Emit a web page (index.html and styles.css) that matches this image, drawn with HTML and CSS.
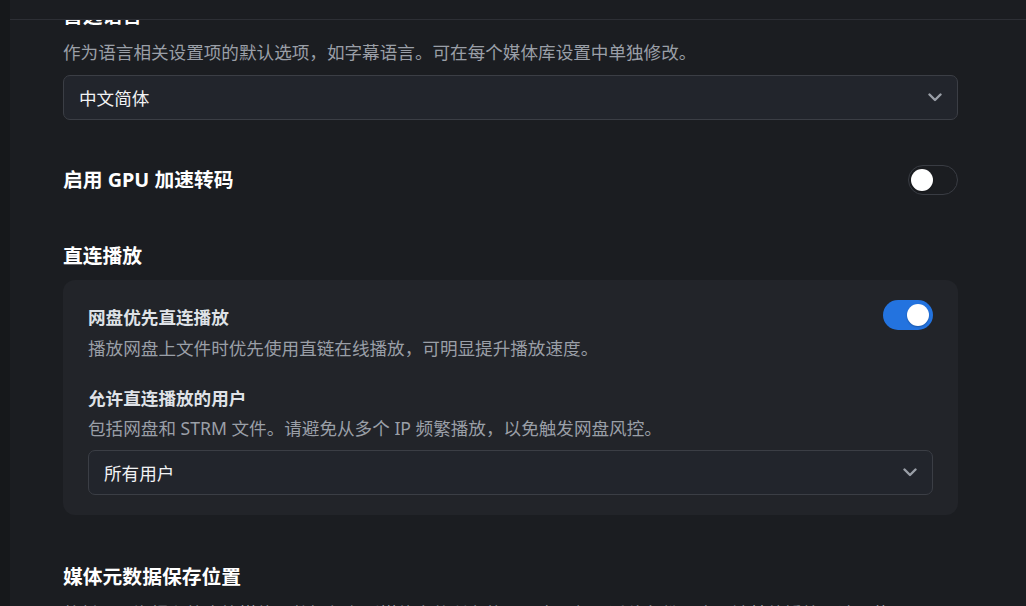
FILE: index.html
```html
<!DOCTYPE html>
<html lang="zh-CN">
<head>
<meta charset="utf-8">
<title>设置</title>
<link rel="stylesheet" href="styles.css">
</head>
<body>
<div class="sidebar"></div>
<main class="main">
  <div class="topbar"></div>
  <div class="content">
    <h2 class="title">首选语言</h2>
    <p class="desc gap-10">作为语言相关设置项的默认选项，如字幕语言。可在每个媒体库设置中单独修改。</p>
    <div class="select gap-11">
      <span>中文简体</span>
      <svg class="chev" width="14" height="9" viewBox="0 0 14 9"><path d="M1.5 1.5 L7 7 L12.5 1.5" fill="none" stroke="currentColor" stroke-width="2.4" stroke-linecap="round" stroke-linejoin="round"/></svg>
    </div>

    <div class="row-gpu">
      <h2 class="title">启用 GPU 加速转码</h2>
      <div class="toggle off"><span class="knob"></span></div>
    </div>

    <h2 class="title gap-47">直连播放</h2>
    <div class="card">
      <div class="card-row">
        <div class="card-text">
          <div class="card-title first">网盘优先直连播放</div>
          <p class="desc gap-7">播放网盘上文件时优先使用直链在线播放，可明显提升播放速度。</p>
        </div>
        <div class="toggle on"><span class="knob"></span></div>
      </div>
      <div class="card-block">
        <div class="card-title">允许直连播放的用户</div>
        <p class="desc gap-6">包括网盘和 STRM 文件。请避免从多个 IP 频繁播放，以免触发网盘风控。</p>
        <div class="select gap-10">
          <span>所有用户</span>
          <svg class="chev" width="14" height="9" viewBox="0 0 14 9"><path d="M1.5 1.5 L7 7 L12.5 1.5" fill="none" stroke="currentColor" stroke-width="2.4" stroke-linecap="round" stroke-linejoin="round"/></svg>
        </div>
      </div>
    </div>

    <h2 class="title gap-48">媒体元数据保存位置</h2>
    <p class="desc gap-10">将封面、海报和简介等媒体元数据保存到媒体文件所在的目录中，便于迁移备份，也可被其他播放器读取使用。</p>
  </div>
</main>
</body>
</html>
```

FILE: styles.css
```css
* { box-sizing: border-box; }

html, body {
  margin: 0;
  height: 100%;
}

body {
  display: flex;
  background: #1b1d21;
  font-family: "Noto Sans", "Noto Sans CJK SC", sans-serif;
  overflow: hidden;
}

.sidebar {
  width: 10px;
  flex: none;
  background: #16181b;
}

.main {
  flex: 1;
  position: relative;
  overflow: hidden;
  background: #1b1d21;
}

.topbar {
  position: absolute;
  top: 0;
  left: 0;
  right: 0;
  height: 20px;
  background: #1b1d21;
  border-bottom: 1px solid #2d2f35;
  z-index: 2;
}

.content {
  padding: 2px 68px 0 53px;
}

.title {
  margin: 0;
  font-size: 19.8px;
  line-height: 28px;
  font-weight: 700;
  color: #ffffff;
  font-family: "Noto Sans", "Noto Sans CJK SC", sans-serif;
}

.desc {
  margin: 0;
  font-size: 17.6px;
  line-height: 24px;
  color: #9a9fa7;
  white-space: nowrap;
}

.gap-6 { margin-top: 6px; }
.gap-7 { margin-top: 7px; }
.gap-10 { margin-top: 10px; }
.gap-11 { margin-top: 11px; }
.gap-47 { margin-top: 47px; }
.gap-48 { margin-top: 48px; }

.select {
  height: 45px;
  display: flex;
  align-items: center;
  justify-content: space-between;
  padding: 0 15px 0 15px;
  background: #22252c;
  border: 1px solid #3b3e45;
  border-radius: 7px;
  color: #f2f3f5;
  font-size: 17.6px;
}

.chev {
  color: #9a9fa7;
  display: block;
}

.row-gpu {
  margin-top: 45px;
  height: 30px;
  display: flex;
  align-items: center;
  justify-content: space-between;
}

.toggle {
  width: 50px;
  height: 30px;
  border-radius: 15px;
  display: flex;
  align-items: center;
  flex: none;
}

.toggle.off {
  border: 1px solid #393c43;
  padding-left: 2px;
}

.toggle.on {
  background: #2373df;
  justify-content: flex-end;
  padding-right: 4px;
}

.knob {
  width: 22px;
  height: 22px;
  border-radius: 50%;
  background: #ffffff;
  box-shadow: 0 1px 2px rgba(0, 0, 0, 0.25);
}

.card {
  margin-top: 10px;
  background: #222429;
  border-radius: 12px;
  padding: 20px 25px 20px 25px;
}

.card-row {
  display: flex;
  justify-content: space-between;
  align-items: flex-start;
}

.card-title {
  font-size: 17.6px;
  line-height: 24px;
  font-weight: 700;
  color: #dfe2e7;
}

.card-title.first {
  margin-top: 5px;
}

.card-block {
  margin-top: 26px;
}
```
